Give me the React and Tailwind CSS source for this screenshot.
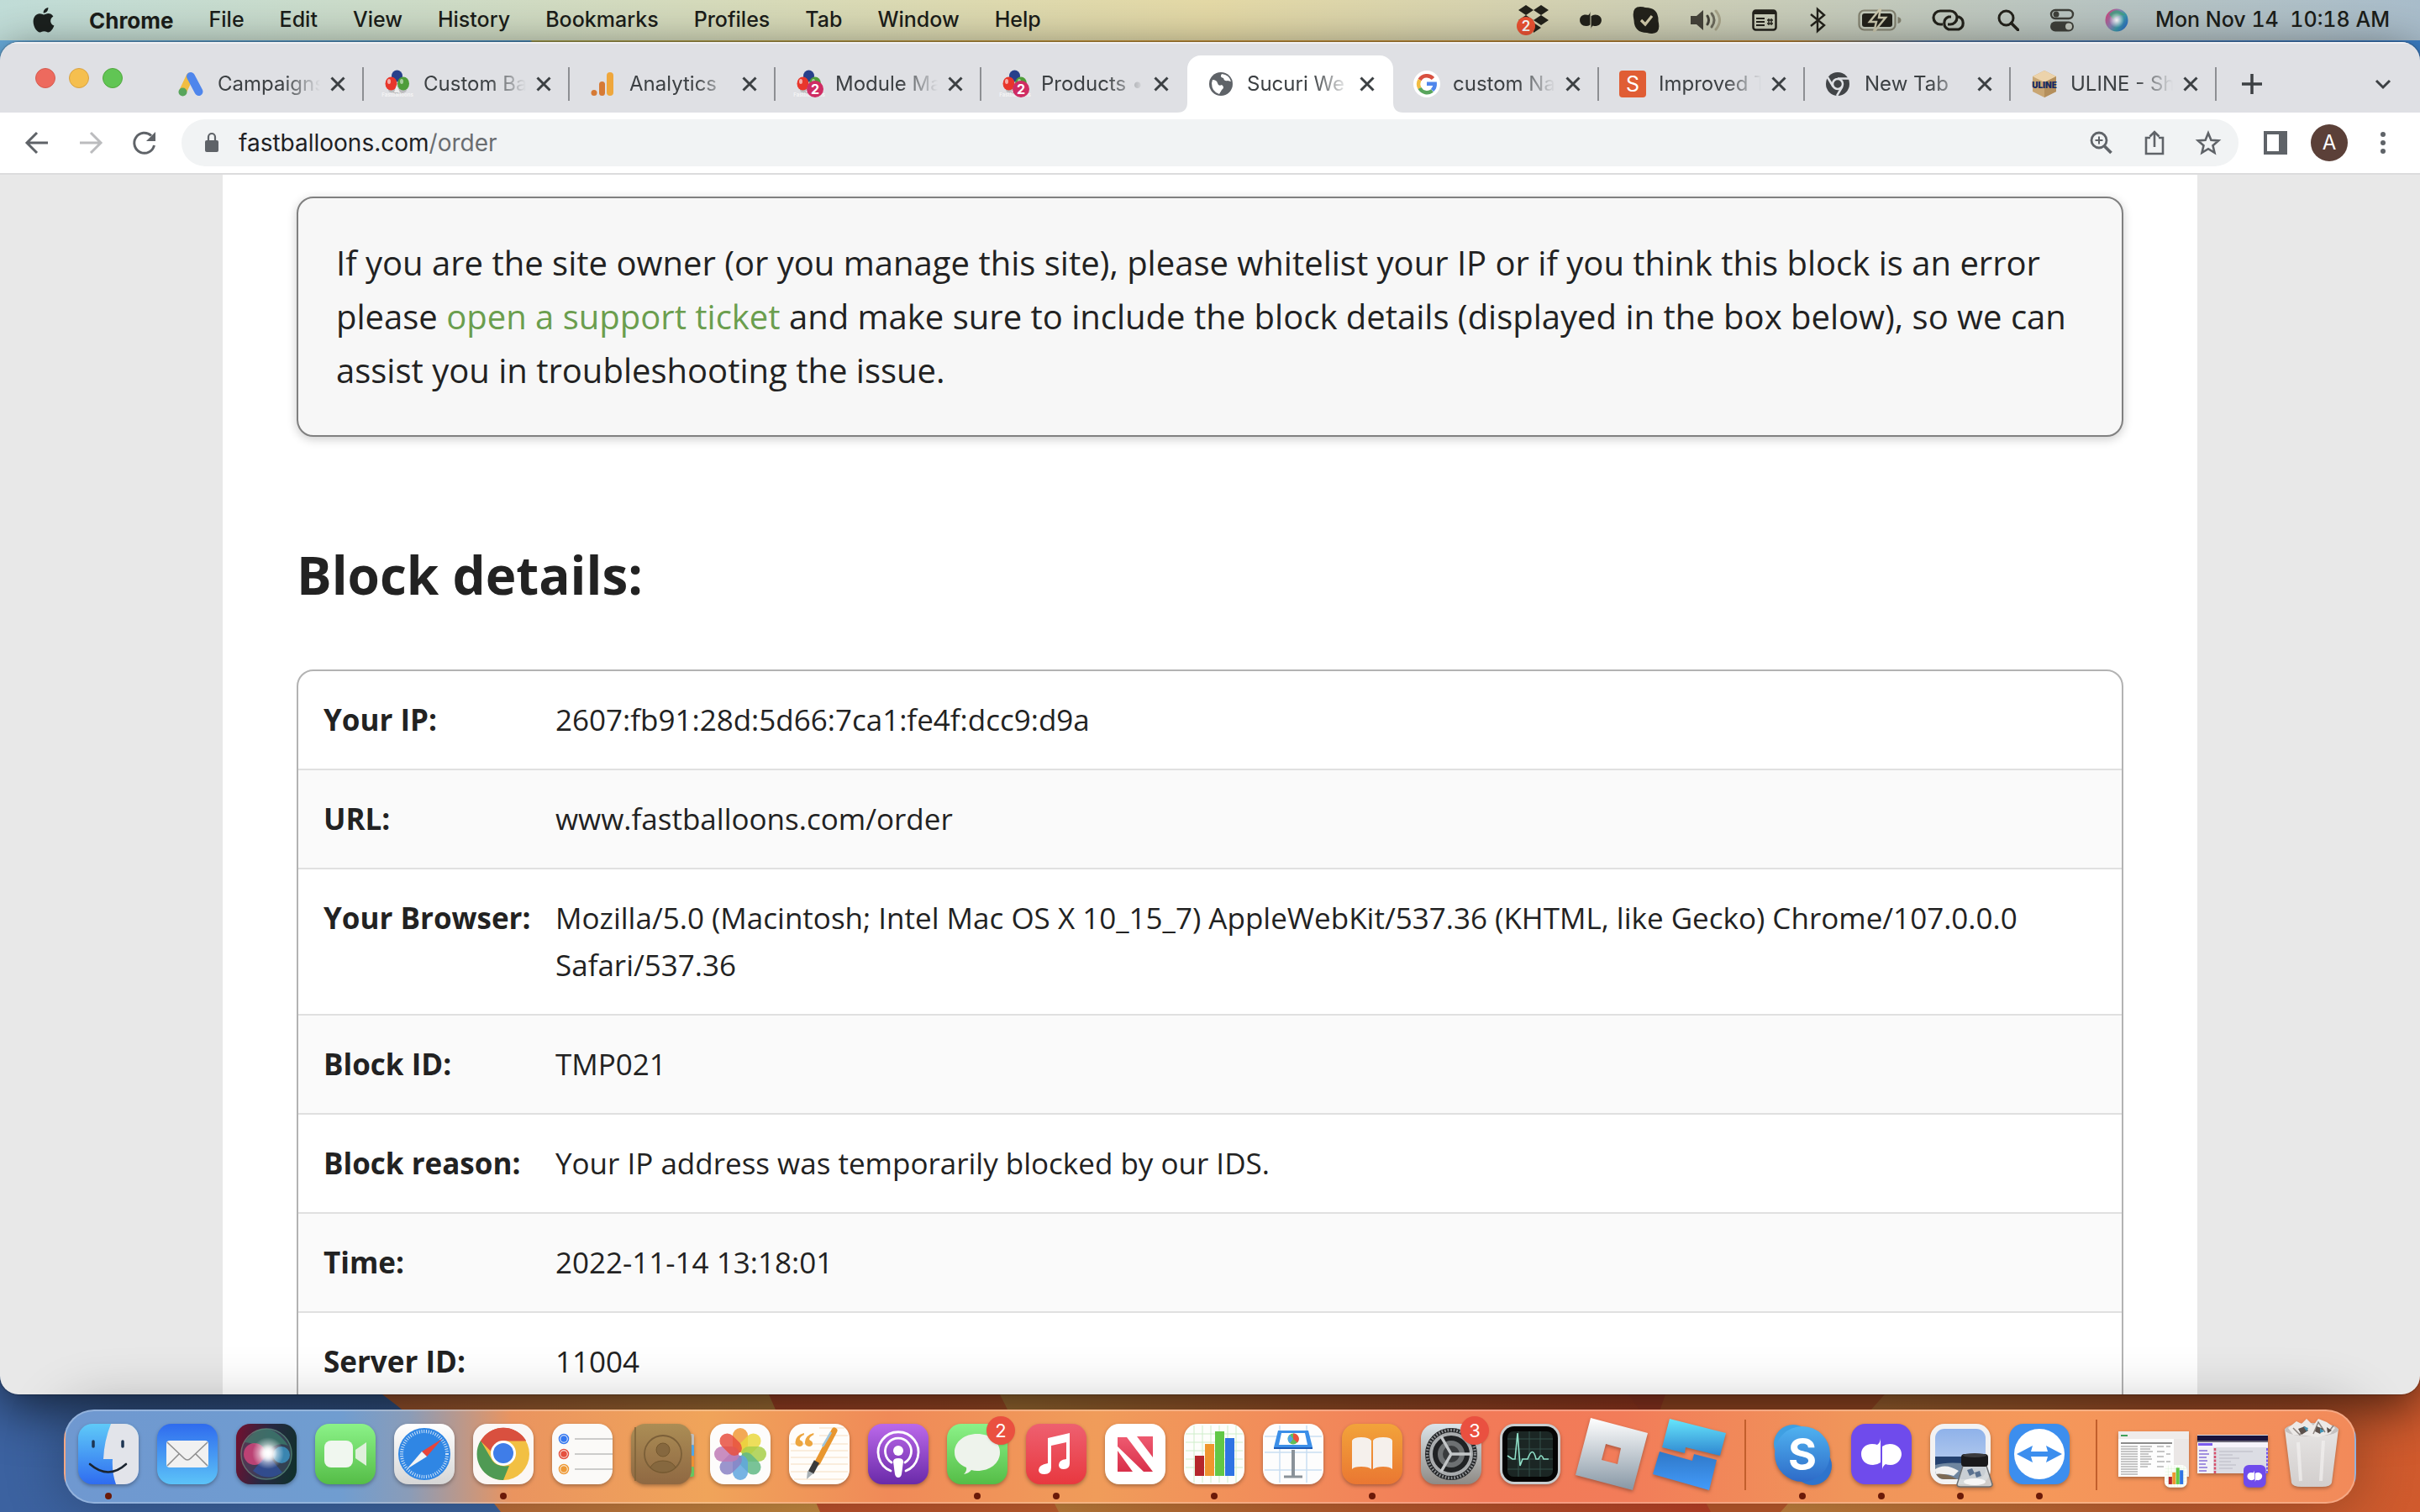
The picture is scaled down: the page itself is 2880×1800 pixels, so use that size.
import { Fragment } from 'react';
import clsx from 'clsx';

const MENUS = ['File', 'Edit', 'View', 'History', 'Bookmarks', 'Profiles', 'Tab', 'Window', 'Help'];

const DETAILS = [
  ['Your IP:', '2607:fb91:28d:5d66:7ca1:fe4f:dcc9:d9a'],
  ['URL:', 'www.fastballoons.com/order'],
  [
    'Your Browser:',
    'Mozilla/5.0 (Macintosh; Intel Mac OS X 10_15_7) AppleWebKit/537.36 (KHTML, like Gecko) Chrome/107.0.0.0 Safari/537.36',
  ],
  ['Block ID:', 'TMP021'],
  ['Block reason:', 'Your IP address was temporarily blocked by our IDS.'],
  ['Time:', '2022-11-14 13:18:01'],
  ['Server ID:', '11004'],
];

/* ---------- wallpaper ---------- */

function Wallpaper() {
  return (
    <svg
      className="absolute inset-0 w-full h-full"
      viewBox="0 0 2880 1800"
      preserveAspectRatio="none"
      aria-hidden="true"
    >
      <defs>
        <linearGradient id="wpTop" x1="0" x2="1" y1="0" y2="0">
          <stop offset="0" stopColor="#6aaede" />
          <stop offset="0.219" stopColor="#4f93c4" />
          <stop offset="0.22" stopColor="#a9a452" />
          <stop offset="0.45" stopColor="#cf9c3e" />
          <stop offset="0.74" stopColor="#c98f3a" />
          <stop offset="0.8" stopColor="#5b82b4" />
          <stop offset="1" stopColor="#3d80c8" />
        </linearGradient>
        <linearGradient id="wpBlue" x1="0" x2="1" y1="0" y2="0">
          <stop offset="0" stopColor="#3c62a0" />
          <stop offset="1" stopColor="#3f73a8" />
        </linearGradient>
        <linearGradient id="wpGold" x1="0" x2="1" y1="0" y2="0">
          <stop offset="0" stopColor="#bd6238" />
          <stop offset="1" stopColor="#c98f42" />
        </linearGradient>
        <linearGradient id="wpRed" x1="0" x2="1" y1="0" y2="0">
          <stop offset="0" stopColor="#c04e2c" />
          <stop offset="1" stopColor="#c4622f" />
        </linearGradient>
        <linearGradient id="wpMid" x1="0" x2="1" y1="0" y2="0">
          <stop offset="0" stopColor="#c48a40" />
          <stop offset="0.4" stopColor="#be6531" />
          <stop offset="1" stopColor="#bd3f26" />
        </linearGradient>
        <linearGradient id="wpEnd" x1="0" x2="1" y1="0" y2="0">
          <stop offset="0" stopColor="#c6843f" />
          <stop offset="0.6" stopColor="#c45f30" />
          <stop offset="1" stopColor="#d05a2d" />
        </linearGradient>
      </defs>
      <rect width="2880" height="900" fill="url(#wpTop)" />
      <rect y="900" width="2880" height="900" fill="url(#wpBlue)" />
      <path d="M400 1600 L455 1660 Q530 1715 596 1800 H1000 V1600Z" fill="url(#wpGold)" />
      <path d="M890 1600 L915 1660 L976 1800 H1300 V1600Z" fill="url(#wpRed)" />
      <path d="M1170 1600 L1190 1660 L1260 1800 H2060 L1938 1660 L1900 1600Z" fill="url(#wpMid)" />
      <path d="M1900 1600 L1938 1660 L2036 1800 H2140 V1600Z" fill="#b8452a" />
      <path d="M2000 1600 L1982 1660 L1975 1680 L2036 1800 H2880 V1600Z" fill="#bd5a2c" />
      <path d="M2270 1600 L2243 1660 L2119 1800 H2880 V1600Z" fill="url(#wpEnd)" />
    </svg>
  );
}

/* ---------- menu bar ---------- */

function AppleLogo() {
  return (
    <svg className="w-[26px] h-8" viewBox="0 0 26 32" fill="#1c211f" aria-hidden="true">
      <path d="M18.4 1c.2 3.6-2.600 6.700-5.700 6.600C12.300 4.300 15.300 1.200 18.400 1zM13.300 9.400c1.100 0 2.900-1.300 5.200-1.300 2.200 0 4.500 1.200 5.900 3.300-4.700 2.700-4.100 9.300 1 11.200-1.300 3.700-4.100 7.900-7 7.900-1.900 0-2.500-1.200-4.900-1.200s-3.200 1.200-4.900 1.200C4.900 30.500.6 24 .6 17.800c0-6 3.700-9.600 7.500-9.600 2.300 0 4 1.200 5.200 1.200z" />
    </svg>
  );
}

function StatusIcons() {
  return (
    <div className="flex items-center gap-9 text-[#23221b]">
      {/* dropbox with its counter */}
      <svg className="w-9 h-9 overflow-visible" viewBox="0 0 36 36" fill="currentColor" aria-label="Dropbox">
        <path d="M9 0l9 6-9 6-9-6zM27 0l9 6-9 6-9-6zM9 12l9 6-9 6-9-6zM27 12l9 6-9 6-9-6zM18 21l9 6-9 6z" />
        <circle cx="9" cy="25" r="11" fill="#ee5333" />
        <text x="9" y="31" textAnchor="middle" fontFamily="Inter, sans-serif" fontSize="17" fontWeight="600" fill="#fff">
          2
        </text>
      </svg>
      <svg className="w-7 h-6" viewBox="10 16 52 40" fill="currentColor" aria-label="Dialpad">
        <path d="M35 17v29q-4 3-9 3c-9 0-14-6-14-13s5-12 13-12q4 0 6 1 4-3 4-8z" />
        <path d="M37 55V27q4-3 9-3c9 0 14 6 14 12s-5 13-13 13q-4 0-6-1-4 3-4 7z" />
      </svg>
      <svg className="w-8 h-8" viewBox="0 0 32 32" aria-label="Skype">
        <path d="M9 0q4 0 6 1 16 0 15.500 16Q34 32 23 32q-3 0-6-1Q2 31 1.500 16-2 0 9 0z" fill="currentColor" />
        <path d="M10 16l5 5 8-10" fill="none" stroke="#d2cbaa" strokeWidth="3.200" />
      </svg>
      <svg className="w-[38px] h-7" viewBox="0 0 38 28" fill="none" strokeWidth="3" strokeLinecap="round" aria-label="Sound">
        <path d="M1 9h7l8-7v24l-8-7H1z" fill="#45433a" />
        <path d="M21 9q3 5 0 10" stroke="#45433a" />
        <path d="M26 6q6 8 0 16" stroke="#6c6a5c" />
        <path d="M31 3q9 11 0 22" stroke="#a8a48a" />
      </svg>
      <svg className="w-[30px] h-7" viewBox="0 0 30 28" fill="none" stroke="currentColor" aria-label="Shortcuts">
        <rect x="1.500" y="2.500" width="27" height="23" rx="3" strokeWidth="2.500" />
        <path d="M2 5h26" strokeWidth="4" />
        <path d="M5 12h10M5 16h10M5 20h10" strokeWidth="2" />
        <path d="M18 14h7M18 18h7M20 12v8M23 12v8" strokeWidth="1.400" />
      </svg>
      <svg className="w-6 h-8" viewBox="0 0 24 32" fill="none" stroke="currentColor" strokeWidth="2.400" aria-label="Bluetooth">
        <path d="M4 9l16 13-8 7V3l8 7L4 23" />
      </svg>
      <svg className="w-[52px] h-7" viewBox="0 0 52 28" aria-label="Battery">
        <rect x="1.500" y="2.500" width="43" height="23" rx="6" fill="none" stroke="#838270" strokeWidth="2.200" />
        <path d="M47.500 10q4 1 4 4t-4 4z" fill="#838270" />
        <rect x="5" y="6" width="36" height="16" rx="3" fill="currentColor" />
        <path d="M27 0L14 16h8l-3 12 14-17h-8z" fill="currentColor" stroke="#cbc8ae" strokeWidth="2.500" />
      </svg>
      <svg className="w-[42px] h-7" viewBox="0 0 42 28" fill="none" stroke="currentColor" strokeWidth="3.200" aria-label="Link">
        <path d="M13 19h-3a8 8 0 0 1 0-16h12a8 8 0 0 1 0 16h-3" />
        <path d="M29 10h3a8 8 0 0 1 0 15H20a8 8 0 0 1 0-15h3" />
      </svg>
      <svg className="w-[26px] h-[26px]" viewBox="0 0 26 26" fill="none" stroke="currentColor" strokeWidth="3" aria-label="Search">
        <circle cx="10.500" cy="10.500" r="8.500" />
        <path d="M16.500 16.500l8 8" strokeWidth="3.600" strokeLinecap="round" />
      </svg>
      <svg className="w-[30px] h-7" viewBox="0 0 30 28" aria-label="Control Center">
        <rect x="2" y="2" width="26" height="10" rx="5" fill="none" stroke="#3f403a" strokeWidth="2.400" />
        <circle cx="8" cy="7" r="3.500" fill="#3f403a" />
        <rect x="1" y="15.500" width="28" height="12" rx="6" fill="#3f403a" />
        <circle cx="23" cy="21.500" r="4" fill="#c3c8be" />
      </svg>
      <svg className="w-7 h-7" viewBox="0 0 28 28" aria-label="Siri">
        <defs>
          <linearGradient id="siriBar" x1="0" x2="1" y1="0.200" y2="0.800">
            <stop offset="0" stopColor="#d13f78" />
            <stop offset="0.400" stopColor="#8e7fb5" />
            <stop offset="0.650" stopColor="#3c9ba8" />
            <stop offset="1" stopColor="#2a63c8" />
          </linearGradient>
          <radialGradient id="siriGlow">
            <stop offset="0" stopColor="#fff" />
            <stop offset="1" stopColor="#fff" stopOpacity="0" />
          </radialGradient>
        </defs>
        <circle cx="14" cy="14" r="13.500" fill="url(#siriBar)" />
        <path d="M5 7Q14-3 24 8q-10 0-14 5z" fill="#3fa27f" opacity="0.800" />
        <circle cx="14" cy="14" r="9" fill="url(#siriGlow)" />
      </svg>
    </div>
  );
}

function MenuBar() {
  return (
    <header className="relative flex-none h-12 flex items-center pl-[39px] pr-9 text-[25px] text-[#1c1e1a] font-medium bg-gradient-to-r from-[#c1ddd8] via-[#e4d9a6] to-[#a9bdcb]">
      <AppleLogo />
      <nav className="flex items-center gap-[42px] ml-[41px]">
        <button className="text-[26px] font-bold">Chrome</button>
        {MENUS.map((name) => (
          <button key={name}>{name}</button>
        ))}
      </nav>
      <div className="ml-auto flex items-center gap-8">
        <StatusIcons />
        <time className="tabular-nums whitespace-pre">Mon Nov 14{'  '}10:18 AM</time>
      </div>
    </header>
  );
}

/* ---------- favicons ---------- */

function AdsIcon() {
  return (
    <svg className="w-8 h-8" viewBox="0 0 32 32" fill="none" strokeLinecap="round" aria-hidden="true">
      <path d="M14 7L6 24" stroke="#f2bd42" strokeWidth="9" />
      <path d="M15 7l9.500 18" stroke="#4f86ec" strokeWidth="10" />
      <circle cx="5.500" cy="25.500" r="5" fill="#58a55c" />
    </svg>
  );
}

function BalloonsIcon({ badge }) {
  return (
    <svg className="w-8 h-8 overflow-visible" viewBox="0 0 32 32" aria-hidden="true">
      <ellipse cx="16" cy="23" rx="11" ry="5" fill="#9a9a9a" opacity="0.500" />
      <ellipse cx="15.500" cy="6.500" rx="6.500" ry="7" fill="#27408b" />
      <ellipse cx="8.500" cy="15.500" rx="7" ry="8" fill="#e8362b" />
      <ellipse cx="23" cy="15.500" rx="7" ry="8" fill="#4f9d3a" />
      <ellipse cx="6" cy="13" rx="2" ry="3" fill="#fff" opacity="0.600" />
      <ellipse cx="21" cy="13" rx="2" ry="3" fill="#fff" opacity="0.500" />
      <path d="M15 17l4 9h-7z" fill="#eee" />
      <text x="16" y="31" textAnchor="middle" fontFamily="Inter, sans-serif" fontSize="6" fontWeight="700" fill="#f4f4f4">
        Fastballoons
      </text>
      {badge && (
        <>
          <circle cx="23" cy="22" r="10" fill="#cf2c63" />
          <text x="23" y="28" textAnchor="middle" fontFamily="Inter, sans-serif" fontSize="16" fontWeight="700" fill="#fff">
            {badge}
          </text>
        </>
      )}
    </svg>
  );
}

function AnalyticsIcon() {
  return (
    <svg className="w-8 h-8" viewBox="0 0 32 32" aria-hidden="true">
      <rect x="20" y="2" width="8" height="28" rx="4" fill="#efa73c" />
      <rect x="11" y="13" width="7" height="17" rx="3.500" fill="#d67a35" />
      <circle cx="5" cy="26.500" r="3.500" fill="#d67a35" />
    </svg>
  );
}

function GlobeIcon() {
  return (
    <svg className="w-8 h-8" viewBox="0 0 32 32" aria-hidden="true">
      <circle cx="16" cy="16" r="14" fill="#5f6368" />
      <path d="M6 11q5 0 6 4t5 2q4 3 0 6l-3 5Q5 25 5 15zM17 4q-3 4 2 5 1 4 5 3l4 1Q26 5 17 4z" fill="#fff" />
    </svg>
  );
}

function GoogleIcon() {
  return (
    <svg className="w-8 h-8" viewBox="0 0 32 32" aria-hidden="true">
      <circle cx="16" cy="16" r="16" fill="#fff" />
      <g fill="none" strokeWidth="4.500">
        <path d="M23.500 9.500A10 10 0 0 0 7.500 11" stroke="#d85040" />
        <path d="M7.500 11a10 10 0 0 0 0 10" stroke="#f2bd42" />
        <path d="M7.500 21a10 10 0 0 0 15 3" stroke="#58a55c" />
        <path d="M22.500 23.500Q26 20 25.700 15.800H16" stroke="#4f86ec" />
      </g>
    </svg>
  );
}

function SemrushIcon() {
  return (
    <svg className="w-8 h-8" viewBox="0 0 32 32" aria-hidden="true">
      <rect width="32" height="32" rx="4" fill="#e05d34" />
      <text x="16" y="25" textAnchor="middle" fontFamily="Inter, sans-serif" fontSize="25" fill="#fff">
        S
      </text>
    </svg>
  );
}

function ChromeGreyIcon() {
  return (
    <svg className="w-8 h-8" viewBox="0 0 32 32" aria-hidden="true">
      <circle cx="15" cy="16" r="14" fill="#414447" />
      <circle cx="15" cy="16" r="6" fill="none" stroke="#dfe1e5" strokeWidth="2.500" />
      <path d="M15 9.500h13M9.500 19L3 8M20.500 19L14 30" stroke="#dfe1e5" strokeWidth="2.500" />
    </svg>
  );
}

function UlineIcon() {
  return (
    <svg className="w-8 h-8 overflow-visible" viewBox="0 0 32 32" aria-hidden="true">
      <path d="M16 0l14 7v18l-14 7-14-7V7z" fill="#c9a673" />
      <path d="M16 0l14 7-14 7L2 7z" fill="#ecd3ab" />
      <path d="M16 14v18l14-7V7z" fill="#b48f5c" />
      <text x="16" y="21" textAnchor="middle" fontFamily="Inter, sans-serif" fontSize="10" fontWeight="900" fill="#172a63">
        ULINE
      </text>
    </svg>
  );
}

const TABS = [
  { title: 'Campaigns', icon: <AdsIcon />, sep: true },
  { title: 'Custom Ba', icon: <BalloonsIcon />, sep: true },
  { title: 'Analytics', icon: <AnalyticsIcon />, sep: true },
  { title: 'Module Ma', icon: <BalloonsIcon badge="2" />, sep: true },
  { title: 'Products •', icon: <BalloonsIcon badge="2" /> },
  { title: 'Sucuri We', icon: <GlobeIcon />, active: true },
  { title: 'custom Na', icon: <GoogleIcon />, sep: true },
  { title: 'Improved T', icon: <SemrushIcon />, sep: true },
  { title: 'New Tab', icon: <ChromeGreyIcon />, sep: true },
  { title: 'ULINE - Sh', icon: <UlineIcon />, sep: true },
];

/* ---------- browser chrome ---------- */

function Tab({ title, icon, active, sep }) {
  return (
    <div
      className={clsx(
        'relative flex-none w-[245px] h-[68px] flex items-center pl-6',
        active && 'bg-white rounded-t-2xl'
      )}
    >
      {active && (
        <>
          <svg className="absolute -left-3 bottom-0 w-3 h-3" viewBox="0 0 12 12" fill="#fff" aria-hidden="true">
            <path d="M12 0v12H0Q12 12 12 0z" />
          </svg>
          <svg className="absolute -right-3 bottom-0 w-3 h-3" viewBox="0 0 12 12" fill="#fff" aria-hidden="true">
            <path d="M0 0v12h12Q0 12 0 0z" />
          </svg>
        </>
      )}
      {icon}
      <button className="ml-[15px] w-[126px] text-left text-2xl text-[#3c4043] whitespace-nowrap overflow-hidden [mask-image:linear-gradient(to_right,black_62%,transparent_97%)]">
        {title}
      </button>
      <button aria-label={`Close ${title}`} className="ml-[7px] w-5 h-5">
        <svg viewBox="0 0 20 20" stroke="#3c4043" strokeWidth="3" aria-hidden="true">
          <path d="M2.500 2.500l15 15M17.500 2.500l-15 15" />
        </svg>
      </button>
      {sep && <span className="ml-auto w-0.5 h-10 bg-[#8d8f93]" />}
    </div>
  );
}

function TabStrip() {
  return (
    <div className="flex-none h-[84px] flex items-end bg-[#dfe0e4] border-t-2 border-[#f1f1f3]">
      <div className="w-[188px] h-full flex gap-4 pl-[42px] pt-[29px]">
        <button aria-label="Close window" className="w-6 h-6 rounded-full bg-[#ed6a5e] border border-[#d55b50]" />
        <button aria-label="Minimize window" className="w-6 h-6 rounded-full bg-[#f5bf4f] border border-[#d8a243]" />
        <button aria-label="Zoom window" className="w-6 h-6 rounded-full bg-[#61c554] border border-[#51a73e]" />
      </div>
      {TABS.map((tab) => (
        <Tab key={tab.title} {...tab} />
      ))}
      <div className="flex-1 h-[68px] flex items-center justify-between pl-[30px] pr-[34px]">
        <button aria-label="New tab" className="w-6 h-6">
          <svg viewBox="0 0 24 24" stroke="#3c4043" strokeWidth="3.500" aria-hidden="true">
            <path d="M12 0v24M0 12h24" />
          </svg>
        </button>
        <button aria-label="Search tabs" className="w-5 h-5">
          <svg viewBox="0 0 20 20" fill="none" stroke="#3c4043" strokeWidth="3" aria-hidden="true">
            <path d="M2 6l8 8 8-8" />
          </svg>
        </button>
      </div>
    </div>
  );
}

function Toolbar() {
  return (
    <div className="flex-none h-[74px] flex items-center bg-white border-b-2 border-[#dcdcdd] pl-7 pr-[30px] text-[#5f6368]">
      <div className="flex gap-8">
        <button aria-label="Back" className="w-8 h-8">
          <svg viewBox="0 0 32 32" fill="none" stroke="currentColor" strokeWidth="3" aria-hidden="true">
            <path d="M29 16H5M16 4L4 16l12 12" />
          </svg>
        </button>
        <button aria-label="Forward" className="w-8 h-8 text-[#bbbcbe]">
          <svg viewBox="0 0 32 32" fill="none" stroke="currentColor" strokeWidth="3" aria-hidden="true">
            <path d="M3 16h24M16 4l12 12-12 12" />
          </svg>
        </button>
        <button aria-label="Reload" className="w-8 h-8">
          <svg viewBox="0 0 32 32" fill="none" stroke="currentColor" strokeWidth="3" aria-hidden="true">
            <path d="M27.500 19A12 12 0 1 1 24 7.500" />
            <path d="M29 3v11H18z" fill="currentColor" stroke="none" />
          </svg>
        </button>
      </div>
      <div className="ml-7 flex-1 h-14 rounded-full bg-[#f1f3f4] flex items-center pl-7 pr-5">
        <svg className="w-4 h-[22px] overflow-visible" viewBox="0 0 16 22" aria-label="Secure">
          <rect y="8" width="16" height="14" rx="2" fill="#5f6368" />
          <path d="M4 8V4a4 4 0 0 1 8 0v4" fill="none" stroke="#5f6368" strokeWidth="2.200" />
        </svg>
        <a href="#order" className="ml-6 text-[28px] text-[#202124]">
          fastballoons.com<span className="text-[#6a6d71]">/order</span>
        </a>
        <div className="ml-auto flex gap-8">
          <button aria-label="Zoom" className="w-8 h-8">
            <svg viewBox="0 0 32 32" fill="none" stroke="currentColor" strokeWidth="2.800" aria-hidden="true">
              <circle cx="14" cy="13" r="9" />
              <path d="M20.500 20l8 8" strokeWidth="3.800" />
              <path d="M14 8.500v9M9.500 13h9" strokeWidth="2" />
            </svg>
          </button>
          <button aria-label="Share" className="w-8 h-8">
            <svg viewBox="0 0 32 32" fill="none" stroke="currentColor" strokeWidth="2.600" aria-hidden="true">
              <path d="M11 10H6v19h20V10h-5M16 21V3M10.500 8.500L16 3l5.500 5.500" />
            </svg>
          </button>
          <button aria-label="Bookmark this tab" className="w-8 h-8">
            <svg viewBox="0 0 32 32" fill="none" stroke="currentColor" strokeWidth="2.600" aria-hidden="true">
              <path d="M16 4.500l3.400 8.200 8.800.700-6.700 5.800 2 8.600-7.500-4.600-7.500 4.600 2-8.600-6.700-5.800 8.800-.700z" />
            </svg>
          </button>
        </div>
      </div>
      <div className="ml-[30px] flex items-center">
        <button aria-label="Side panel" className="w-7 h-7">
          <svg viewBox="0 0 28 28" aria-hidden="true">
            <path d="M0 0h28v28H0zM4 4v20h14V4z" fill="currentColor" fillRule="evenodd" />
          </svg>
        </button>
        <button aria-label="Profile" className="ml-7 w-11 h-11 rounded-full bg-[#5b4038] text-white text-2xl">
          A
        </button>
        <button aria-label="Menu" className="ml-7 w-7 h-8">
          <svg viewBox="0 0 28 32" fill="currentColor" aria-hidden="true">
            <circle cx="14" cy="6" r="3" />
            <circle cx="14" cy="16" r="3" />
            <circle cx="14" cy="26" r="3" />
          </svg>
        </button>
      </div>
    </div>
  );
}

/* ---------- web page ---------- */

function BlockPage() {
  return (
    <main className="flex-1 min-h-0 overflow-hidden bg-[#e8e8e8] px-[265px] font-['Open_Sans',sans-serif] text-[#222]">
      <div className="bg-white px-[88px] pt-[26px]">
        <p className="border-2 border-[#808080] rounded-[20px] bg-[#f7f7f7] shadow-[0_3px_12px_rgba(0,0,0,0.2)] p-[45px] text-[40px] leading-[64px]">
          If you are the site owner (or you manage this site), please whitelist your IP or if you think this
          block is an error please{' '}
          <a href="#ticket" className="text-[#6b9e4e]">
            open a support ticket
          </a>{' '}
          and make sure to include the block details (displayed in the box below), so we can assist you in
          troubleshooting the issue.
        </p>
        <h2 className="mt-[120px] mb-[69px] text-[62px] leading-[88px] font-bold">Block details:</h2>
        <div className="border-2 border-[#b3b3b3] rounded-[20px] overflow-hidden">
          <table className="w-full text-[35px] leading-[56px] border-collapse">
            <tbody>
              {DETAILS.map(([label, value]) => (
                <tr key={label} className="align-top border-b-2 border-[#e0e0e0] even:bg-[#fafafa]">
                  <th scope="row" className="w-[306px] pl-[30px] py-[30px] text-left font-bold whitespace-nowrap">
                    {label}
                  </th>
                  <td className="py-[30px] pr-[30px]">{value}</td>
                </tr>
              ))}
            </tbody>
          </table>
        </div>
      </div>
    </main>
  );
}

/* ---------- dock ---------- */

function DockDefs() {
  const pairs = [
    ['gFinder', '#5fcaf8', '#2f6cf0'],
    ['gMail', '#2f6bee', '#5cc3f8'],
    ['gGreen', '#8bf288', '#55bd47'],
    ['gWhite', '#ffffff', '#d6d6d6'],
    ['gBook', '#ab8d55', '#8f6842'],
    ['gPod', '#bb69ea', '#6a2aa9'],
    ['gMusic', '#ee6070', '#e8383f'],
    ['gNews', '#ee5a70', '#d9304a'],
    ['gBooks', '#f2a33a', '#ea7732'],
    ['gGear', '#dbe4e9', '#8e8a85'],
    ['gRoblox', '#ffffff', '#8797a5'],
    ['gStudioTop', '#66e6fc', '#2f86d0'],
    ['gStudioLow', '#2f78c8', '#439bfa'],
    ['gSkype', '#4fb2f0', '#2e6bc8'],
    ['gPreview', '#8fb2ea', '#c3d4ee'],
    ['gTrash', '#e6e4e3', '#d2cecd'],
  ];
  return (
    <svg className="absolute w-0 h-0" aria-hidden="true">
      <defs>
        {pairs.map(([id, from, to]) => (
          <linearGradient key={id} id={id} x1="0" x2="0" y1="0" y2="1">
            <stop offset="0" stopColor={from} />
            <stop offset="1" stopColor={to} />
          </linearGradient>
        ))}
        <linearGradient id="gSiri" x1="0" x2="1" y1="0.300" y2="0.500">
          <stop offset="0" stopColor="#6e1230" />
          <stop offset="0.500" stopColor="#282842" />
          <stop offset="1" stopColor="#12302e" />
        </linearGradient>
        <radialGradient id="gGlow">
          <stop offset="0" stopColor="#fff" />
          <stop offset="0.300" stopColor="#fff" stopOpacity="0.800" />
          <stop offset="1" stopColor="#fff" stopOpacity="0" />
        </radialGradient>
        <clipPath id="tileClip">
          <rect width="72" height="72" rx="17" />
        </clipPath>
        <clipPath id="photoClip">
          <rect x="6" y="6" width="60" height="60" rx="11" />
        </clipPath>
      </defs>
    </svg>
  );
}

const Tile = ({ fill }) => <rect width="72" height="72" rx="17" fill={fill} />;

const finder = (
  <g clipPath="url(#tileClip)">
    <rect width="72" height="72" fill="url(#gFinder)" />
    <path d="M39 0Q31 20 30 42h11q-1 16 4 30h30V0z" fill="#e2e4ea" />
    <path d="M18 21v6M53 21v6" stroke="#1d3552" strokeWidth="3.500" strokeLinecap="round" />
    <path d="M14 48q22 19 43 0" fill="none" stroke="#1a2430" strokeWidth="2.600" strokeLinecap="round" />
  </g>
);

const mail = (
  <>
    <Tile fill="url(#gMail)" />
    <rect x="11" y="20" width="50" height="32" rx="4" fill="#f1f1f1" />
    <path d="M12 50l14-14M60 50L46 36M12 22l20 19q4 4 8 0l20-19" fill="none" stroke="#8f8f8f" strokeWidth="1.600" />
  </>
);

const siri = (
  <>
    <Tile fill="url(#gSiri)" />
    <circle cx="36" cy="36" r="30" fill="#4d5570" opacity="0.500" stroke="#7fc0a4" strokeWidth="1.500" />
    <path d="M10 22Q36-12 62 26 46 20 36 36 24 22 10 22z" fill="#3d9b78" opacity="0.500" />
    <circle cx="22" cy="36" r="13" fill="#e2457f" opacity="0.750" />
    <circle cx="54" cy="37" r="10" fill="#3da3d8" opacity="0.700" />
    <path d="M20 56L37 36l18 22q-18 12-35-2z" fill="#2d55b0" opacity="0.600" />
    <circle cx="38" cy="35" r="19" fill="url(#gGlow)" />
    <circle cx="38" cy="35" r="11" fill="url(#gGlow)" />
  </>
);

const facetime = (
  <>
    <Tile fill="url(#gGreen)" />
    <rect x="11" y="20" width="34" height="32" rx="8" fill="#f0f7ef" />
    <path d="M48 31l13-9v28l-13-9z" fill="#dff0dc" />
  </>
);

const safari = (
  <>
    <Tile fill="url(#gWhite)" />
    <circle cx="36" cy="36" r="31" fill="#2f86e4" />
    <circle cx="36" cy="36" r="27" fill="none" stroke="#cfe3f8" strokeWidth="4" strokeDasharray="1 1.800" />
    <path d="M57 18L33 33l6 6z" fill="#e8443a" />
    <path d="M15 54l18-21 6 6z" fill="#f4f4f4" />
  </>
);

const chrome = (
  <>
    <Tile fill="#fbf7f5" />
    <circle cx="36" cy="36" r="31" fill="#f2c043" />
    <path d="M36 36L9 21a31 31 0 0 1 54-1H36z" fill="#d9503f" />
    <path d="M36 67A31 31 0 0 1 9 20l14 24q6 8 20 6z" fill="#4f9a54" />
    <path d="M9 20.500A31 31 0 0 1 63 20.500H36q-12 0-15 12z" fill="#d9503f" />
    <circle cx="36" cy="35" r="15" fill="#fff" />
    <circle cx="36" cy="35" r="12" fill="#3f7de8" />
  </>
);

const reminders = (
  <>
    <Tile fill="#fbfaf8" />
    {[
      [18, '#3478f0'],
      [36, '#e5503f'],
      [54, '#ee9a36'],
    ].map(([y, color]) => (
      <Fragment key={color}>
        <circle cx="14" cy={y} r="5.500" fill="none" stroke={color} strokeWidth="1.500" />
        <circle cx="14" cy={y} r="3.800" fill={color} />
        <path d={`M27 ${y}h45`} stroke="#bcbcbc" strokeWidth="1.600" />
      </Fragment>
    ))}
  </>
);

const contacts = (
  <>
    <rect x="68" y="12" width="7" height="14" rx="2" fill="#bdbdbd" />
    <rect x="68" y="25" width="7" height="14" rx="2" fill="#4ea5e8" />
    <rect x="68" y="38" width="7" height="14" rx="2" fill="#ee8f33" />
    <rect x="68" y="51" width="7" height="12" rx="2" fill="#65c660" />
    <Tile fill="url(#gBook)" />
    <path d="M5 4v64" stroke="#7d6238" strokeWidth="1.500" />
    <circle cx="38" cy="36" r="22" fill="none" stroke="#7b5f38" strokeWidth="1.800" />
    <circle cx="38" cy="31" r="8" fill="#86683f" stroke="#74582f" />
    <path d="M23 52q4-8 15-8t15 8q-6 6-15 6t-15-6z" fill="#86683f" stroke="#74582f" />
  </>
);

const PETALS = ['#f19a37', '#ead83e', '#a8cf4a', '#62b985', '#5fa6de', '#8a83c4', '#bf7ab5', '#e8503f'];

const photos = (
  <>
    <Tile fill="#fdfcfb" />
    {PETALS.map((color, i) => (
      <rect
        key={color}
        x="27"
        y="5"
        width="18"
        height="30"
        rx="9"
        fill={color}
        opacity="0.850"
        transform={`rotate(${i * 45} 36 36)`}
      />
    ))}
    <circle cx="36" cy="36" r="2" fill="#fff" />
  </>
);

const pages = (
  <>
    <Tile fill="#fffdfa" />
    <path d="M36 5h30M36 14h34M2 24h68M2 32h68M2 40h68M2 48h68M2 57h68M6 66h60" stroke="#f5ddc0" strokeWidth="1.200" />
    <text x="5" y="46" fontFamily="Liberation Serif, serif" fontSize="52" fontWeight="700" fill="#eda640">
      “
    </text>
    <path d="M54 8L34 46" stroke="#e8962e" strokeWidth="7" strokeLinecap="round" />
    <path d="M50 10L40 27" stroke="#9fc6dd" strokeWidth="2.500" />
    <path d="M33 45L26 58" stroke="#3b3b3b" strokeWidth="7" />
    <path d="M22 56l7 3-8 7z" fill="#a8b0b4" />
  </>
);

const podcasts = (
  <>
    <Tile fill="url(#gPod)" />
    <g fill="none" stroke="#fff" strokeWidth="2.800" strokeLinecap="round">
      <path d="M27 56a24 24 0 1 1 18 0" />
      <path d="M28 46a15.500 15.500 0 1 1 16 0" />
    </g>
    <circle cx="36" cy="32" r="6" fill="#fff" />
    <path d="M30 45q0-4 6-4t6 4l-2 15q-1 4-4 4t-4-4z" fill="#fff" />
  </>
);

const messages = (
  <>
    <Tile fill="url(#gGreen)" />
    <path d="M36 12c15 0 27 9 27 22S51 56 36 56q-4 0-7-1-3 4-9 5 4-4 3-8C14 48 9 42 9 34c0-13 12-22 27-22z" fill="#eef3ec" />
  </>
);

const music = (
  <>
    <Tile fill="url(#gMusic)" />
    <path d="M26 17l26-6v36q0 7-7 7-6 0-6-5 0-6 9-7V22l-18 4v26q0 8-8 8-7 0-7-5 0-6 11-8z" fill="#fff" />
  </>
);

const news = (
  <>
    <Tile fill="#fff" />
    <path d="M15 16h11l31 41H46L15 27z" fill="url(#gNews)" />
    <path d="M15 32v25h18zM38 15h19v25z" fill="url(#gNews)" />
  </>
);

const numbers = (
  <>
    <Tile fill="#fdfefb" />
    <path d="M2 12h68M2 22h68M2 32h68M2 42h68M2 52h68M12 2v68M22 2v68M32 2v68M42 2v68M52 2v68M62 2v68" stroke="#cfeeca" />
    <rect x="13" y="38" width="11" height="24" fill="#b5272c" />
    <rect x="25" y="24" width="11" height="38" fill="#ef962f" />
    <rect x="37" y="9" width="11" height="53" fill="#62c846" />
    <rect x="49" y="17" width="11" height="45" fill="#2f74e4" />
  </>
);

const keynote = (
  <>
    <Tile fill="#fdfdfd" />
    <path d="M2 15h68M2 34h68M2 55h68M20 2v68M52 2v68" stroke="#c9def2" strokeWidth="1.500" />
    <path d="M18 8h36l5 20H13z" fill="#3c8fe8" />
    <path d="M22 11h28l3 14H19z" fill="#fff" />
    <path d="M13 28h46v2H13z" fill="#1e5cb8" />
    <circle cx="36" cy="18" r="6.500" fill="#62bf58" />
    <path d="M36 18v-6.500a6.500 6.500 0 0 1 5 11z" fill="#e8503f" />
    <path d="M36 18l-4-5a6.500 6.500 0 0 0 0 10z" fill="#4ea5e8" />
    <path d="M36 31v31" stroke="#8a9299" strokeWidth="4" />
    <path d="M25 63h22" stroke="#8a9299" strokeWidth="3" />
  </>
);

const books = (
  <>
    <Tile fill="url(#gBooks)" />
    <path d="M12 54V20q2-4 11-4t12 4v34q-3-3-12-3t-11 3zM37 54V20q2-4 12-4t11 4v34q-3-3-11-3t-12 3z" fill="#f5f0ec" />
  </>
);

const settings = (
  <>
    <Tile fill="url(#gGear)" />
    <circle cx="36" cy="36" r="31" fill="#202224" />
    <circle cx="36" cy="36" r="28.500" fill="none" stroke="#8c8f92" strokeWidth="3.500" strokeDasharray="1.800 1.800" />
    <circle cx="36" cy="36" r="24" fill="none" stroke="#a9acae" strokeWidth="4" />
    <circle cx="36" cy="36" r="16" fill="#6d7072" />
    <circle cx="36" cy="36" r="10" fill="#393b3d" />
    <path d="M36 36h24M36 36L24 15M36 36L24 57" stroke="#c3c6c8" strokeWidth="3.500" />
  </>
);

const monitor = (
  <>
    <Tile fill="#c9ced0" />
    <rect x="3" y="3" width="66" height="66" rx="14" fill="#050505" />
    <rect x="9" y="9" width="54" height="54" rx="7" fill="#1b2624" />
    <path d="M9 18h54M9 30h54M9 42h54M9 54h54M22 9v54M35 9v54M48 9v54" stroke="#35504a" strokeWidth="1" />
    <path d="M9 38l6 4h3l3-31 3 39 3-8h6q6-17 10 0h3q3-8 6 0h6" fill="none" stroke="#8fe0c8" strokeWidth="1.600" />
  </>
);

const roblox = (
  <path d="M14-7l68 18-18 68-68-18zM32 24l-5 19 19 5 4-19z" fill="url(#gRoblox)" fillRule="evenodd" />
);

const robloxStudio = (
  <>
    <path d="M14-6l67 17-7 27-41-10-1 7L5 28z" fill="url(#gStudioTop)" />
    <path d="M2 33l39 11 2-8 27 7-9 36-67-19z" fill="url(#gStudioLow)" />
  </>
);

const skype = (
  <>
    <circle cx="25" cy="24" r="23" fill="#3f9fe2" />
    <circle cx="48" cy="50" r="23" fill="#2e74cc" />
    <circle cx="36" cy="36" r="33" fill="url(#gSkype)" />
    <text x="36" y="55" textAnchor="middle" fontFamily="Inter, sans-serif" fontSize="52" fontWeight="700" fill="#fff">
      S
    </text>
  </>
);

const dialpad = (
  <>
    <Tile fill="#6f4bec" />
    <path d="M35 17v29q-4 3-9 3c-9 0-14-6-14-13s5-12 13-12q4 0 6 1 4-3 4-8z" fill="#fff" />
    <path d="M37 55V27q4-3 9-3c9 0 14 6 14 12s-5 13-13 13q-4 0-6-1-4 3-4 7z" fill="#fff" />
  </>
);

const preview = (
  <>
    <Tile fill="#f3f2f2" />
    <g clipPath="url(#photoClip)">
      <rect x="6" y="6" width="60" height="60" fill="url(#gPreview)" />
      <path d="M6 39h60v12H6z" fill="#24416f" />
      <path d="M6 49q20-6 60 2v16H6z" fill="#6f86a0" />
      <path d="M6 54q12-8 28 2l-6 6q-12-4-22 0z" fill="#f0f0f0" />
      <path d="M6 60q12-2 26 6H6z" fill="#7d6a55" />
    </g>
    <path d="M39 50h28l7 22q0 3-4 3H36q-4 0-4-3z" fill="#d3d7d9" fillOpacity="0.900" stroke="#6b6f72" strokeWidth="1.500" />
    <path d="M44 55l6-2 3 6-6 3zM53 58l6-2 2 6-6 2z" fill="#5a7290" />
    <ellipse cx="53" cy="69" rx="13" ry="4" fill="#f7f7f7" />
    <rect x="37" y="36" width="32" height="15" rx="4" fill="#19191b" />
    <ellipse cx="53" cy="37.500" rx="14" ry="2.500" fill="#3a3a3c" />
  </>
);

const teamviewer = (
  <>
    <Tile fill="#3c8eee" />
    <circle cx="36" cy="36" r="30" fill="#fff" />
    <path d="M9 36l19-10-2 7h20l-2-7 19 10-19 10 2-7H26l2 7z" fill="#3c8eee" />
  </>
);

const sheetWindow = (
  <>
    <rect x="-6" y="9" width="84" height="54" fill="#fdfdfd" />
    <rect x="-6" y="9" width="84" height="9" fill="#efeceb" />
    <rect x="60" y="18" width="18" height="45" fill="#ebe7e6" />
    <rect x="-3" y="13" width="8" height="2" fill="#3fa05a" />
    <path d="M-3 23h61" stroke="#666" strokeWidth="1.500" />
    <path
      d="M-3 27h20M-3 30h20M-3 33h20M-3 36h20M-3 39h20M-3 42h20M-3 45h20M-3 48h20M-3 51h20M-3 54h20M-3 57h20M-3 60h20M20 27h14M20 30h12M20 33h15M20 36h10M20 39h13M20 42h14M20 45h10M20 48h13M20 51h9M40 27h8M40 33h9M40 39h8M40 45h9M40 51h8M51 27h5M51 36h5M51 45h5"
      stroke="#b4b4b4"
      strokeWidth="1.500"
    />
    <g transform="translate(49 49) scale(0.370)">{numbers}</g>
  </>
);

const dialpadWindow = (
  <>
    <rect x="-6" y="13" width="84" height="46" fill="#dcdde4" />
    <rect x="-6" y="14" width="84" height="6" fill="#19133c" />
    <rect x="-6" y="20" width="84" height="2" fill="#6b6878" />
    <rect x="-6" y="22" width="84" height="6" fill="#f6f4fb" />
    <rect x="-5" y="23" width="17" height="3" fill="#7a5bee" />
    <rect x="-6" y="28" width="19" height="31" fill="#f3f2f6" />
    <path d="M-4 32h10M-4 36h12M-4 40h9M-4 44h10M-4 48h8M-4 52h10M-4 56h9" stroke="#8872d8" strokeWidth="1.400" />
    <path d="M15 29v30" stroke="#d8506c" strokeWidth="2.500" strokeDasharray="3 1.500" />
    <path d="M20 33h40M20 37h16M20 41h24M20 45h14M20 49h20M20 53h16" stroke="#b9bac4" strokeWidth="1.200" />
    <path d="M77 29v30" stroke="#7a5bee" strokeWidth="2" strokeDasharray="3 1.500" />
    <g transform="translate(49 49) scale(0.370)">{dialpad}</g>
  </>
);

const trash = (
  <>
    <path d="M4 6l64 0-8 64q-1 5-12 5H24q-11 0-12-5z" fill="url(#gTrash)" />
    <ellipse cx="36" cy="7" rx="32" ry="8" fill="#c5c1c0" />
    <path d="M8 5l10-8 6 3 6-6 8 8 6-8 10 4 10 7-6 7-14 4-16-2-14-1z" fill="#ece9e7" />
    <path d="M14 5l8 8 6-8M38 12l6-14 8 12M56 10l6-8" fill="none" stroke="#8d8581" strokeWidth="1.500" />
    <path d="M20 6l8-3 4 5-8 5zM42 3l8 3-4 6-6-3zM54 4l6 4-5 3z" fill="#5b504b" />
    <path d="M26 3l6 2-2 4zM46 5l5 4-5 2z" fill="#3f93b5" />
    <path d="M20 22l3 46M50 20l-3 48" stroke="#f3f1f0" strokeWidth="4" opacity="0.700" />
  </>
);

const DOCK = [
  [
    { name: 'Finder', art: finder, open: true },
    { name: 'Mail', art: mail },
    { name: 'Siri', art: siri },
    { name: 'FaceTime', art: facetime },
    { name: 'Safari', art: safari },
    { name: 'Google Chrome', art: chrome, open: true },
    { name: 'Reminders', art: reminders },
    { name: 'Contacts', art: contacts },
    { name: 'Photos', art: photos },
    { name: 'Pages', art: pages },
    { name: 'Podcasts', art: podcasts },
    { name: 'Messages', art: messages, open: true, badge: '2' },
    { name: 'Music', art: music, open: true },
    { name: 'News', art: news },
    { name: 'Numbers', art: numbers, open: true },
    { name: 'Keynote', art: keynote },
    { name: 'Books', art: books, open: true },
    { name: 'System Preferences', art: settings, badge: '3' },
    { name: 'Activity Monitor', art: monitor },
    { name: 'Roblox', art: roblox },
    { name: 'Roblox Studio', art: robloxStudio },
  ],
  [
    { name: 'Skype', art: skype, open: true },
    { name: 'Dialpad', art: dialpad, open: true },
    { name: 'Preview', art: preview, open: true },
    { name: 'TeamViewer', art: teamviewer, open: true },
  ],
  [
    { name: 'Numbers window', art: sheetWindow },
    { name: 'Dialpad window', art: dialpadWindow },
    { name: 'Trash', art: trash },
  ],
];

function DockItem({ name, art, open, badge }) {
  return (
    <button aria-label={name} className="relative w-[94px] h-full pt-[15px] flex flex-col items-center">
      <svg
        className="w-[72px] h-[72px] overflow-visible drop-shadow-[0_2px_2px_rgba(0,0,0,0.3)]"
        viewBox="0 0 72 72"
        aria-hidden="true"
      >
        {art}
      </svg>
      {open && <span className="mt-[10px] w-2 h-2 rounded-full bg-[#6b1a08]" />}
      {badge && (
        <span className="absolute top-[6px] right-[2px] w-[34px] h-[34px] rounded-full bg-[#ea5040] shadow text-white text-[22px] leading-[34px] text-center">
          {badge}
        </span>
      )}
    </button>
  );
}

function Dock() {
  return (
    <footer className="relative flex-none mx-auto mt-[18px] mb-[10px] h-28 flex px-1 rounded-[36px] border-2 border-white/25 shadow-[0_0_70px_rgba(0,0,0,0.3)] bg-[linear-gradient(to_right,#6f98d0_0%,#709dd0_12%,#8a9cb8_15%,#ea945f_19.5%,#f0a45a_28%,#f08a58_36%,#f09c5a_45%,#f28a5a_54%,#f27a58_62%,#f27c59_68%,#f0955a_78%,#f5985a_86%,#f28a5a_100%)]">
      {DOCK.map((group, i) => (
        <Fragment key={group[0].name}>
          {i > 0 && (
            <span className="w-[42px] flex justify-center items-center pb-1">
              <span className="w-0.5 h-[84px] bg-[#c25f2c]" />
            </span>
          )}
          {group.map((item) => (
            <DockItem key={item.name} {...item} />
          ))}
        </Fragment>
      ))}
    </footer>
  );
}

export default function App() {
  return (
    <div className="relative h-screen overflow-hidden flex flex-col font-['Inter',sans-serif]">
      <Wallpaper />
      <DockDefs />
      <MenuBar />
      <section className="relative flex-1 min-h-0 mt-0.5 flex flex-col rounded-[22px] overflow-hidden shadow-[0_16px_60px_rgba(0,0,0,0.65),0_0_2px_rgba(0,0,0,0.7)]">
        <TabStrip />
        <Toolbar />
        <BlockPage />
      </section>
      <Dock />
    </div>
  );
}
